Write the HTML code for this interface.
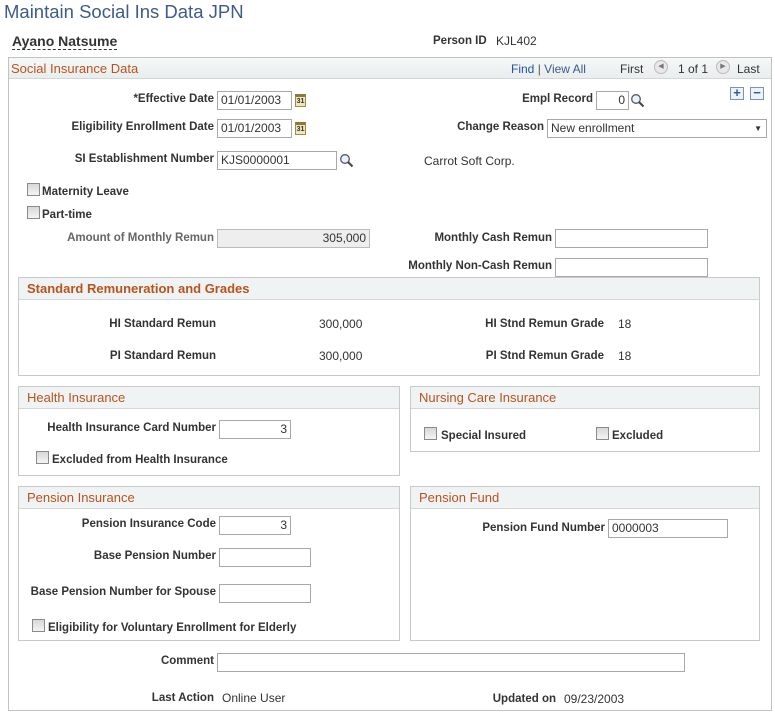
<!DOCTYPE html>
<html><head><meta charset="utf-8"><style>
*{box-sizing:border-box}
body{margin:0;width:775px;height:715px;background:#fff;font-family:"Liberation Sans",Arial,sans-serif;font-size:12px;color:#333;position:relative;overflow:hidden}
.a{position:absolute;white-space:nowrap}
.l{position:absolute;font-weight:bold;text-align:right;white-space:nowrap;color:#333;font-size:11.5px;padding-top:1px}
.t{position:absolute;white-space:nowrap;color:#333}
.in{position:absolute;border:1px solid #a8a8a8;background:#fff;height:19px;padding:1px 3px;line-height:15px;font-size:12px;color:#333;white-space:nowrap}
.r{text-align:right}
.box{position:absolute;border:1px solid #c9c9c9}
.hd{position:absolute;left:0;right:0;top:0;height:22px;background:#f0f3f3;border-bottom:1px solid #d6d6d6;color:#b9531c;font-size:13px;padding:3px 8px}
.cb{position:absolute;width:13px;height:13px;border:1px solid #8a8a8a;background:linear-gradient(#d8d8d8,#f4f4f4)}
.cal{position:absolute;width:11px;height:13px;border:1px solid #9a8a50;background:#f0e6b8;font-size:7px;line-height:10px;text-align:center;font-weight:bold;border-top:3px solid #8a7a40}
.mag{position:absolute;width:15px;height:15px}
</style></head><body>
<div class="a" style="left:4px;top:1px;font-size:18.5px;color:#3e5b8b">Maintain Social Ins Data JPN</div>
<div class="a" style="left:12px;top:33px;font-size:14px;font-weight:bold;color:#333;border-bottom:1px dashed #333;line-height:16px">Ayano Natsume</div>
<div class="l" style="left:433px;top:34px">Person ID</div>
<div class="t" style="left:496px;top:34px">KJL402</div>

<div class="box" style="left:8px;top:57px;width:764px;height:654px;border-color:#c2c2c2">
  <div class="hd" style="height:21px;background:linear-gradient(#f6f8f8,#e8eded);padding:3px 2px;font-size:13px">Social Insurance Data</div>
</div>
<div class="t" style="left:511px;top:62px;color:#2552a0">Find <span style="color:#555">|</span> <span style="color:#3a5a8a">View All</span></div>
<div class="t" style="left:620px;top:62px">First</div>
<div class="a" style="left:654px;top:60px;width:14px;height:14px;border-radius:50%;background:#e8e8e8;border:1px solid #bbb;font-size:7px;text-align:center;line-height:12px;color:#777">◀</div>
<div class="t" style="left:678px;top:62px">1 of 1</div>
<div class="a" style="left:716px;top:60px;width:14px;height:14px;border-radius:50%;background:#e8e8e8;border:1px solid #bbb;font-size:7px;text-align:center;line-height:12px;color:#777">▶</div>
<div class="t" style="left:737px;top:62px">Last</div>

<div class="l" style="left:0;width:214px;top:92px">*Effective Date</div>
<div class="in" style="left:217px;top:91px;width:75px">01/01/2003</div>
<div class="cal" style="left:295px;top:94px">31</div>
<div class="l" style="left:0;width:214px;top:120px">Eligibility Enrollment Date</div>
<div class="in" style="left:217px;top:119px;width:75px">01/01/2003</div>
<div class="cal" style="left:295px;top:122px">31</div>
<div class="l" style="left:0;width:214px;top:152px">SI Establishment Number</div>
<div class="in" style="left:217px;top:151px;width:120px">KJS0000001</div>
<svg class="mag" style="left:339px;top:153px" viewBox="0 0 15 15"><circle cx="6" cy="6" r="4.3" fill="#e8f2fa" stroke="#556" stroke-width="1.3"/><path d="M9 9l4.5 4.5" stroke="#444" stroke-width="2"/></svg>
<div class="t" style="left:424px;top:154px">Carrot Soft Corp.</div>

<div class="l" style="left:400px;width:193px;top:92px">Empl Record</div>
<div class="in r" style="left:596px;top:91px;width:33px">0</div>
<svg class="mag" style="left:630px;top:93px" viewBox="0 0 15 15"><circle cx="6" cy="6" r="4.3" fill="#e8f2fa" stroke="#556" stroke-width="1.3"/><path d="M9 9l4.5 4.5" stroke="#444" stroke-width="2"/></svg>
<div class="a" style="left:730px;top:87px;width:14px;height:13px;border:1px solid #7a94b8;background:#eef3f8;color:#2a5aa0;font-weight:bold;font-size:13px;line-height:10px;text-align:center">+</div>
<div class="a" style="left:750px;top:87px;width:14px;height:13px;border:1px solid #7a94b8;background:#eef3f8;color:#2a5aa0;font-weight:bold;font-size:13px;line-height:10px;text-align:center">−</div>
<div class="l" style="left:400px;width:144px;top:120px">Change Reason</div>
<div class="in" style="left:547px;top:119px;width:220px">New enrollment<span style="position:absolute;right:4px;top:1px;font-size:8px">▼</span></div>

<div class="cb" style="left:27px;top:183px"></div>
<div class="l" style="left:42px;top:185px">Maternity Leave</div>
<div class="cb" style="left:27px;top:206px"></div>
<div class="l" style="left:42px;top:208px">Part-time</div>

<div class="l" style="left:0;width:214px;top:231px;color:#666">Amount of Monthly Remun</div>
<div class="in r" style="left:217px;top:229px;width:153px;background:#eee;border-color:#bbb">305,000</div>
<div class="l" style="left:400px;width:152px;top:231px">Monthly Cash Remun</div>
<div class="in" style="left:555px;top:229px;width:153px"></div>
<div class="l" style="left:400px;width:152px;top:259px">Monthly Non-Cash Remun</div>
<div class="in" style="left:555px;top:258px;width:153px"></div>

<div class="box" style="left:18px;top:277px;width:742px;height:99px">
  <div class="hd" style="font-weight:bold">Standard Remuneration and Grades</div>
</div>
<div class="l" style="left:0;width:216px;top:317px">HI Standard Remun</div>
<div class="t" style="left:319px;top:317px">300,000</div>
<div class="l" style="left:0;width:216px;top:349px">PI Standard Remun</div>
<div class="t" style="left:319px;top:349px">300,000</div>
<div class="l" style="left:400px;width:204px;top:317px">HI Stnd Remun Grade</div>
<div class="t" style="left:618px;top:317px">18</div>
<div class="l" style="left:400px;width:204px;top:349px">PI Stnd Remun Grade</div>
<div class="t" style="left:618px;top:349px">18</div>

<div class="box" style="left:18px;top:386px;width:382px;height:90px"><div class="hd">Health Insurance</div></div>
<div class="l" style="left:0;width:216px;top:421px">Health Insurance Card Number</div>
<div class="in r" style="left:219px;top:420px;width:72px">3</div>
<div class="cb" style="left:36px;top:451px"></div>
<div class="l" style="left:52px;top:453px">Excluded from Health Insurance</div>

<div class="box" style="left:410px;top:386px;width:350px;height:66px"><div class="hd">Nursing Care Insurance</div></div>
<div class="cb" style="left:424px;top:427px"></div>
<div class="l" style="left:441px;top:429px">Special Insured</div>
<div class="cb" style="left:596px;top:427px"></div>
<div class="l" style="left:612px;top:429px">Excluded</div>

<div class="box" style="left:18px;top:486px;width:382px;height:155px"><div class="hd">Pension Insurance</div></div>
<div class="l" style="left:0;width:216px;top:517px">Pension Insurance Code</div>
<div class="in r" style="left:219px;top:516px;width:72px">3</div>
<div class="l" style="left:0;width:216px;top:549px">Base Pension Number</div>
<div class="in" style="left:219px;top:548px;width:92px"></div>
<div class="l" style="left:0;width:216px;top:585px">Base Pension Number for Spouse</div>
<div class="in" style="left:219px;top:584px;width:92px"></div>
<div class="cb" style="left:32px;top:619px"></div>
<div class="l" style="left:48px;top:621px">Eligibility for Voluntary Enrollment for Elderly</div>

<div class="box" style="left:410px;top:486px;width:350px;height:155px"><div class="hd">Pension Fund</div></div>
<div class="l" style="left:400px;width:205px;top:521px">Pension Fund Number</div>
<div class="in" style="left:608px;top:519px;width:120px">0000003</div>

<div class="l" style="left:0;width:214px;top:654px">Comment</div>
<div class="in" style="left:217px;top:653px;width:468px"></div>
<div class="l" style="left:0;width:214px;top:691px">Last Action</div>
<div class="t" style="left:222px;top:691px">Online User</div>
<div class="l" style="left:400px;width:156px;top:692px">Updated on</div>
<div class="t" style="left:564px;top:692px">09/23/2003</div>
</body></html>
